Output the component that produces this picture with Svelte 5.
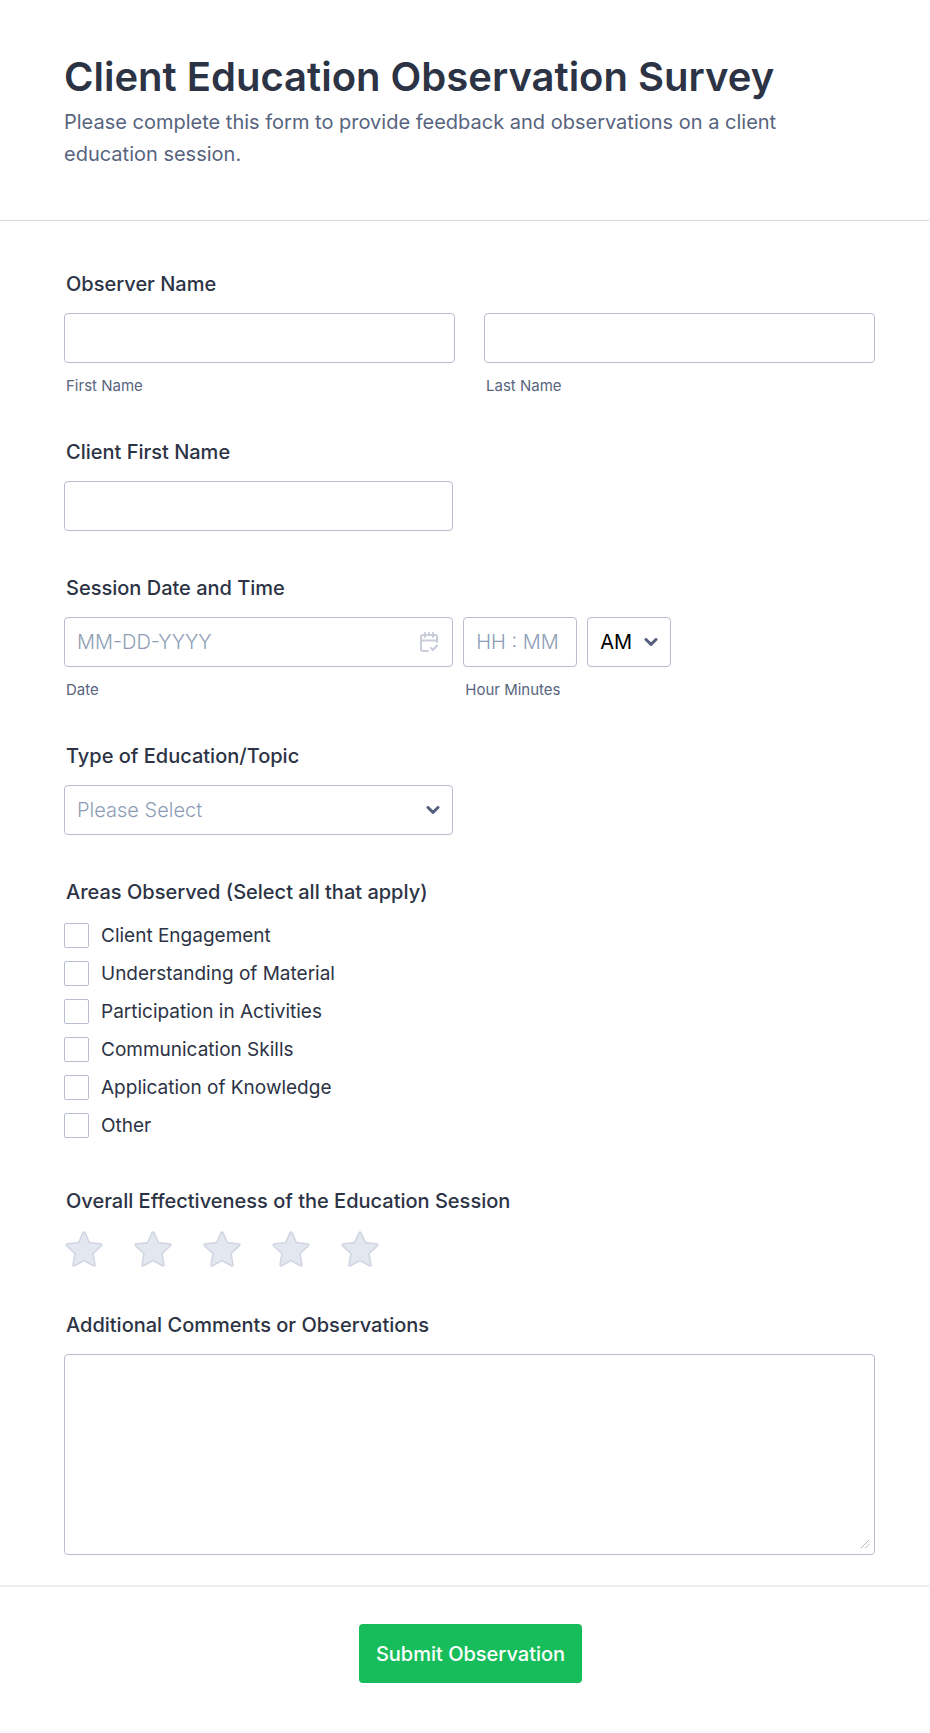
<script lang="ts">
	const areas = [
		'Client Engagement',
		'Understanding of Material',
		'Participation in Activities',
		'Communication Skills',
		'Application of Knowledge',
		'Other'
	];
	const topics = ['Health', 'Nutrition', 'Medication', 'Life Skills'];
	const stars = [1, 2, 3, 4, 5];

	let selectedAreas: string[] = [];
	let rating = 0;
	let topic = '';
	let period = 'AM';
</script>

<form class="form" on:submit|preventDefault>
	<header class="header">
		<h1>Client Education Observation Survey</h1>
		<p>Please complete this form to provide feedback and observations on a client education session.</p>
	</header>

	<div class="fields">
		<fieldset class="field">
			<legend class="label">Observer Name</legend>
			<div class="names">
				<div class="column">
					<input class="control" id="first" type="text" />
					<label class="sub-label" for="first">First Name</label>
				</div>
				<div class="column">
					<input class="control" id="last" type="text" />
					<label class="sub-label" for="last">Last Name</label>
				</div>
			</div>
		</fieldset>

		<div class="field">
			<label class="label" for="client">Client First Name</label>
			<input class="control half" id="client" type="text" />
		</div>

		<fieldset class="field">
			<legend class="label">Session Date and Time</legend>
			<div class="date-time">
				<div class="column half">
					<div class="with-icon">
						<input class="control" id="date" type="text" placeholder="MM-DD-YYYY" />
						<svg class="icon calendar" viewBox="0 0 18 20" aria-hidden="true">
							<path d="M5 1v4M13 1v4M9 1v2M1 8.500h16M17 10V5a2 2 0 0 0-2-2H3a2 2 0 0 0-2 2v12a2 2 0 0 0 2 2h5M11 16l2 2 4-4.500" />
						</svg>
					</div>
					<label class="sub-label" for="date">Date</label>
				</div>
				<div class="column time">
					<input class="control" id="time" type="text" placeholder="HH : MM" />
					<label class="sub-label" for="time">Hour Minutes</label>
				</div>
				<div class="with-icon period">
					<select class="control" aria-label="AM/PM Option" bind:value={period}>
						<option>AM</option>
						<option>PM</option>
					</select>
					<svg class="icon chevron" viewBox="0 0 14 8" aria-hidden="true"><path d="M2 1.500l5 4.800 5-4.800" /></svg>
				</div>
			</div>
		</fieldset>

		<div class="field">
			<label class="label" for="topic">Type of Education/Topic</label>
			<div class="with-icon half">
				<select class="control" class:empty={!topic} id="topic" bind:value={topic}>
					<option value="">Please Select</option>
					{#each topics as item}
						<option>{item}</option>
					{/each}
				</select>
				<svg class="icon chevron" viewBox="0 0 14 8" aria-hidden="true"><path d="M2 1.500l5 4.800 5-4.800" /></svg>
			</div>
		</div>

		<fieldset class="field areas">
			<legend class="label">Areas Observed (Select all that apply)</legend>
			<div class="options">
				{#each areas as area}
					<label class="option">
						<input type="checkbox" value={area} bind:group={selectedAreas} />
						{area}
					</label>
				{/each}
			</div>
		</fieldset>

		<fieldset class="field">
			<legend class="label">Overall Effectiveness of the Education Session</legend>
			<div class="stars">
				{#each stars as star}
					<label class="star" class:on={star <= rating}>
						<input type="radio" name="rating" value={star} aria-label="{star} out of 5" bind:group={rating} />
						<svg viewBox="0 0 38 36" aria-hidden="true">
							<path d="M18 1.700Q19 .3 20 1.700L24.300 11.500 36 12.900Q37.600 13.400 36.400 14.700L28 22.700 30 33.600Q30.100 35.400 28.500 34.700L19 29.600 9.500 34.700Q7.900 35.400 8 33.600L10 22.700 1.600 14.700Q.4 13.400 2 12.900L13.700 11.500z" />
						</svg>
					</label>
				{/each}
			</div>
		</fieldset>

		<div class="field">
			<label class="label" for="comments">Additional Comments or Observations</label>
			<div class="with-icon">
				<textarea class="control" id="comments"></textarea>
				<svg class="icon grip" viewBox="0 0 10 10" aria-hidden="true"><path d="M1 9l8-8M5.500 9L9 5.500" /></svg>
			</div>
		</div>
	</div>

	<footer class="footer">
		<button type="submit">Submit Observation</button>
	</footer>
</form>

<style>
	:global(body) {
		margin: 0;
		background: #fafafc;
	}
	.form,
	.form * {
		box-sizing: border-box;
	}
	.form {
		margin: 0 1px 0 0;
		border-bottom: 2px solid #fafafc;
		background: #fff;
		color: #2c3345;
		font-family: Inter, sans-serif;
	}
	.header {
		padding: 53px 64px 50px;
		border-bottom: 1px solid #d7d8e1;
	}
	h1 {
		margin: 0;
		font-size: 40px;
		font-weight: 600;
		line-height: 48px;
	}
	p {
		margin: 5px 0 0;
		color: #57647e;
		font-size: 20px;
		font-weight: 400;
		line-height: 32px;
	}
	.fields {
		display: flex;
		flex-direction: column;
		gap: 45px;
		padding: 51px 54px 30px 64px;
	}
	.field {
		min-width: 0;
		margin: 0;
		padding: 0;
		border: 0;
	}
	.label {
		display: block;
		margin-bottom: 17px;
		padding: 0 2px;
		font-size: 20px;
		font-weight: 500;
		line-height: 24px;
	}
	.column {
		display: flex;
		flex-direction: column;
		gap: 12px;
	}
	.names {
		display: grid;
		grid-template-columns: 1fr 1fr;
		gap: 29px;
	}
	.date-time {
		display: flex;
		gap: 10px;
	}
	.half {
		width: 48%;
	}
	.time {
		width: 114px;
	}
	.period {
		width: 84px;
	}
	.sub-label {
		padding: 1px 2px 0;
		color: #57647e;
		font-size: 15px;
		line-height: 19px;
	}
	.control {
		display: block;
		width: 100%;
		height: 50px;
		margin: 0;
		padding: 0 12px;
		border: 1px solid #b8bdcf;
		border-radius: 4px;
		background: #fff;
		color: #000;
		font-family: inherit;
		font-size: 20px;
		appearance: none;
	}
	.control.half {
		width: 48%;
	}
	.control::placeholder,
	.control.empty {
		color: #8d9db5;
		font-weight: 300;
		opacity: 1;
	}
	textarea.control {
		height: 201px;
		padding: 10px 12px;
		resize: vertical;
	}
	textarea::-webkit-resizer {
		display: none;
	}
	.with-icon {
		position: relative;
	}
	.icon {
		position: absolute;
		fill: none;
		stroke-linecap: round;
		stroke-linejoin: round;
		pointer-events: none;
	}
	.calendar {
		top: 15px;
		right: 15px;
		width: 18px;
		height: 20px;
		stroke: #c9cdd9;
		stroke-width: 2;
	}
	.chevron {
		top: 21px;
		right: 13px;
		width: 14px;
		height: 8px;
		stroke: #555f7e;
		stroke-width: 3;
	}
	.grip {
		right: 5px;
		bottom: 6px;
		width: 10px;
		height: 10px;
		stroke: #b4b9cb;
		stroke-width: 1;
	}
	.areas {
		margin-bottom: 6px;
	}
	.options {
		display: flex;
		flex-direction: column;
		align-items: flex-start;
		gap: 13px;
		padding-top: 2px;
	}
	.option {
		display: flex;
		align-items: center;
		gap: 12px;
		font-size: 19px;
		line-height: 25px;
	}
	.option input {
		width: 25px;
		height: 25px;
		margin: 0;
		border: 1px solid #b8bdcf;
		border-radius: 2px;
		background: #fff;
		appearance: none;
	}
	.option input:checked {
		background: #2e69ff;
	}
	.stars {
		display: flex;
		gap: 31px;
		padding: 1px 0 1px 1px;
	}
	.star {
		position: relative;
		width: 38px;
		height: 36px;
	}
	.star input {
		position: absolute;
		inset: 0;
		width: 100%;
		height: 100%;
		margin: 0;
		opacity: 0;
	}
	.star svg {
		display: block;
		fill: #e3e7f0;
		stroke: #d0d5e1;
		stroke-width: 1.5;
	}
	.star.on svg {
		fill: #fed54b;
	}
	.footer {
		display: flex;
		justify-content: center;
		padding: 37px 54px 48px 66px;
		border-top: 2px solid #edeef4;
	}
	button {
		height: 59px;
		padding: 0 17px;
		border: 0;
		border-radius: 4px;
		background: #18bd5b;
		color: #fff;
		font-family: inherit;
		font-size: 20px;
		font-weight: 500;
	}
</style>
